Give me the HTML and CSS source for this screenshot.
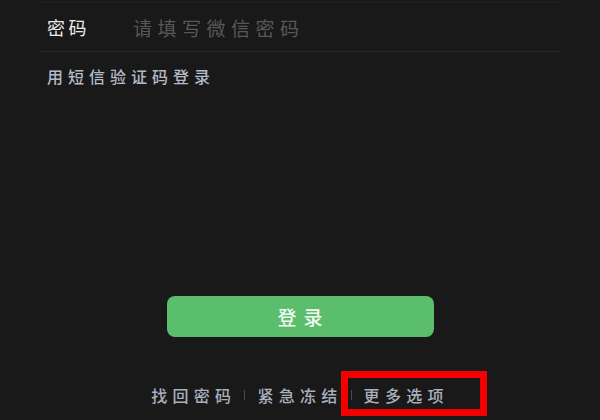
FILE: index.html
```html
<!DOCTYPE html>
<html lang="zh-CN">
<head>
    <meta charset="UTF-8">
    <meta name="viewport" content="width=device-width, initial-scale=1.0">
    <title>登录</title>
    <link rel="stylesheet" href="styles.css">
</head>
<body>
    <div class="page">
        <div class="field">
            <label class="field-label">密码</label>
            <input type="password" class="field-input" placeholder="请填写微信密码">
        </div>

        <a class="sms-link">用短信验证码登录</a>

        <button class="submit">登录</button>

        <div class="footer">
            <a class="footer-link">找回密码</a>
            <span class="divider"></span>
            <a class="footer-link">紧急冻结</a>
            <span class="divider"></span>
            <a class="footer-link marked">更多选项</a>
        </div>
    </div>
</body>
</html>
```

FILE: styles.css
```css
body {
    margin: 0;
    background-color: #191919;
    font-family: "Noto Sans CJK SC", "Noto Sans", sans-serif;
}
.page {
    height: 420px;
    padding: 0 40px;
    box-sizing: border-box;
    display: flex;
    flex-direction: column;
    overflow: hidden;
}
.field {
    margin-top: 2px;
    height: 48px;
    border-top: 1px solid #232323;
    border-bottom: 1px solid #262626;
    display: flex;
    align-items: center;
    padding-left: 7px;
}
.field-label {
    width: 86px;
    color: #ececec;
    font-size: 18px;
    letter-spacing: 3.5px;
}
.field-input {
    flex: 1;
    background: transparent;
    border: none;
    outline: none;
    font-family: inherit;
    font-size: 19px;
    letter-spacing: 5.5px;
    color: #e8e8e8;
    padding: 0;
}
.field-input::placeholder {
    color: #585858;
}
.sms-link {
    margin-top: 13px;
    padding-left: 7px;
    line-height: 22px;
    font-size: 16px;
    font-weight: 500;
    letter-spacing: 5px;
    color: #b3bac8;
}
.submit {
    margin: 209px auto 0;
    width: 267px;
    height: 41px;
    border: none;
    border-radius: 8px;
    background-color: #5abe6c;
    color: #f2f8f2;
    font-family: inherit;
    font-size: 19px;
    font-weight: 500;
    letter-spacing: 7px;
    text-indent: 7px;
}
.footer {
    margin-top: 46px;
    display: flex;
    justify-content: center;
    align-items: center;
}
.footer-link {
    display: block;
    font-size: 16px;
    font-weight: 500;
    line-height: 24px;
    letter-spacing: 5.3px;
    color: #a9b0bd;
}
.divider {
    width: 1px;
    height: 10px;
    margin: 0 12px 0 8px;
    background-color: #4a4a4a;
}
.marked {
    position: relative;
}
.marked::after {
    content: "";
    position: absolute;
    top: -12px;
    bottom: -9px;
    left: -23px;
    right: -38px;
    border: 7px solid #f40000;
}
```
